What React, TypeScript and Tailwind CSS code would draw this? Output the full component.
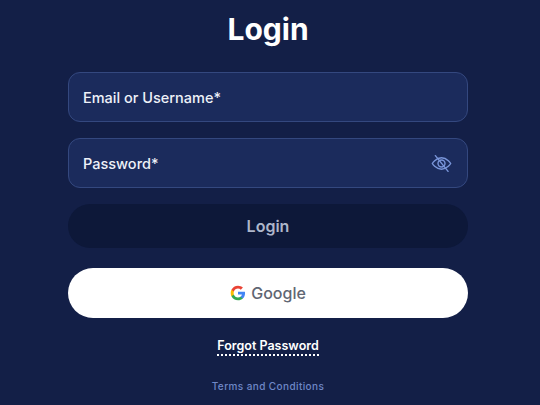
function GoogleLogo() {
  return (
    <svg viewBox="0 0 24 24" className="w-[16px] h-[16px]">
      <path fill="#4285F4" d="M22.56 12.25c0-.78-.07-1.53-.2-2.25H12v4.26h5.92c-.26 1.37-1.04 2.53-2.21 3.31v2.77h3.57c2.08-1.92 3.28-4.74 3.28-8.09z" />
      <path fill="#34A853" d="M12 23c2.97 0 5.46-.98 7.28-2.66l-3.57-2.77c-.98.66-2.23 1.06-3.71 1.06-2.86 0-5.29-1.93-6.16-4.53H2.18v2.84C3.99 20.53 7.7 23 12 23z" />
      <path fill="#FBBC05" d="M5.84 14.09c-.22-.66-.35-1.36-.35-2.09s.13-1.43.35-2.09V7.07H2.18C1.43 8.55 1 10.22 1 12s.43 3.45 1.18 4.93l3.66-2.84z" />
      <path fill="#EA4335" d="M12 5.38c1.62 0 3.06.56 4.21 1.64l3.15-3.15C17.45 2.09 14.97 1 12 1 7.7 1 3.99 3.47 2.18 7.07l3.66 2.84c.87-2.6 3.3-4.53 6.16-4.53z" />
    </svg>
  );
}

function EyeSlash() {
  return (
    <svg viewBox="0 0 24 24" fill="none" stroke="currentColor" strokeWidth={1.6} strokeLinecap="round" className="w-[21px] h-[21px] text-[#7a96da]">
      <path d="M1.5 12S5.2 5.5 12 5.5 22.5 12 22.5 12 18.8 18.5 12 18.5 1.5 12 1.5 12z" />
      <circle cx="12" cy="12" r="4" />
      <path d="M5 3l14.5 18" />
    </svg>
  );
}

export default function App() {
  return (
    <div className="w-[540px] h-[405px] overflow-hidden bg-[#131f47] font-['Inter','Liberation_Sans',sans-serif]">
      <div className="w-[536px] flex flex-col items-center">
        <h1 className="mt-[10px] h-[38px] leading-[38px] text-[30px] font-bold text-white">Login</h1>
        <div className="mt-[24px] w-[400px] h-[50px] rounded-xl border border-[#34487f] bg-[#1b2b5c] flex items-center px-[14px] pt-0.5 text-[14.5px] font-medium text-[#eef1f8]">
          Email or Username*
        </div>
        <div className="mt-4 w-[400px] h-[50px] rounded-xl border border-[#34487f] bg-[#1b2b5c] flex items-center justify-between pl-[14px] pr-[15px] text-[14.5px] font-medium text-[#eef1f8]">
          <span className="pt-0.5">Password*</span>
          <EyeSlash />
        </div>
        <button className="mt-4 w-[400px] h-11 rounded-full bg-[#0d1839] text-[16px] font-semibold text-[#aeb6ca]">Login</button>
        <button className="mt-5 w-[400px] h-[50px] rounded-full bg-white flex items-center justify-center gap-[5px] text-[16px] font-medium text-[#5f6673]">
          <GoogleLogo />
          Google
        </button>
        <a className="mt-[19px] text-[12.5px] leading-[17px] font-semibold text-white border-b-2 border-dotted border-white">Forgot Password</a>
        <a className="mt-[23px] text-[10px] leading-[14px] font-medium tracking-[0.4px] text-[#6f88c8]">Terms and Conditions</a>
      </div>
    </div>
  );
}
